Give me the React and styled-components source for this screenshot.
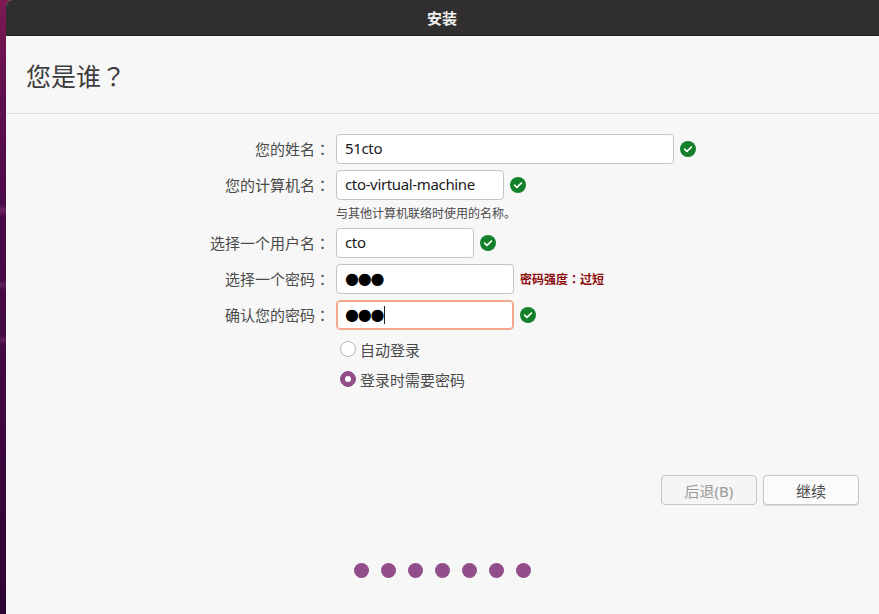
import styled, { createGlobalStyle } from 'styled-components'

const GlobalStyle = createGlobalStyle`
    html, body {
        margin: 0;
        padding: 0;
        height: 614px;
        overflow: hidden;
        background: linear-gradient(180deg,
            #7d1a52 0px, #5e0e50 100px, #4c0a4a 205px,
            #6a2560 210px, #4a0a49 216px, #470a48 280px,
            #62205a 285px, #460a47 290px, #440a46 336px,
            #5f1f58 340px, #430945 345px, #2f0433 614px);
    }
`

function Check() {
    return (
        <CheckIcon viewBox="0 0 16 16">
            <circle cx="8" cy="8" r="8" fill="#12812a" />
            <path d="M4.6 8.2 L7 10.4 L11.4 6" fill="none" stroke="#fff" strokeWidth="1.7" strokeLinecap="round" strokeLinejoin="round" />
        </CheckIcon>
    )
}

export default function App() {
    return (
        <>
            <GlobalStyle />
            <Window>
                <TitleBar>安装</TitleBar>
                <Heading>
                    <h1>您是谁<Punct>？</Punct></h1>
                </Heading>
                <Form>
                    <Row>
                        <Label>您的姓名<Punct>：</Punct></Label>
                        <Input $width={338}>51cto</Input>
                        <Check />
                    </Row>
                    <Row>
                        <Label>您的计算机名<Punct>：</Punct></Label>
                        <Input $width={168}>cto-virtual-machine</Input>
                        <Check />
                    </Row>
                    <Hint>与其他计算机联络时使用的名称。</Hint>
                    <Row>
                        <Label>选择一个用户名<Punct>：</Punct></Label>
                        <Input $width={138}>cto</Input>
                        <Check />
                    </Row>
                    <Row>
                        <Label>选择一个密码<Punct>：</Punct></Label>
                        <Input $width={178}><Dots>●●●</Dots></Input>
                        <Strength>密码强度<Punct>：</Punct>过短</Strength>
                    </Row>
                    <Row>
                        <Label>确认您的密码<Punct>：</Punct></Label>
                        <Input $width={178} $focused><Dots>●●●</Dots><Caret /></Input>
                        <Check />
                    </Row>
                    <Options>
                        <Option>
                            <Radio />
                            自动登录
                        </Option>
                        <Option>
                            <Radio $checked />
                            登录时需要密码
                        </Option>
                    </Options>
                </Form>
                <Actions>
                    <Button disabled>后退(B)</Button>
                    <Button>继续</Button>
                </Actions>
                <Progress>
                    {[0, 1, 2, 3, 4, 5, 6].map((i) => <Dot key={i} />)}
                </Progress>
            </Window>
        </>
    )
}

const Window = styled.div`
    margin-left: 6px;
    height: 614px;
    display: flex;
    flex-direction: column;
    background-color: #f7f7f7;
    border-radius: 6px 0 0 0;
    overflow: hidden;
    font-family: "Noto Sans", "Noto Sans CJK SC", sans-serif;
    color: #4a4a4a;
`

const Punct = styled.span`
    font-family: "Noto Sans CJK TC", sans-serif;
`

const TitleBar = styled.div`
    height: 36px;
    flex-shrink: 0;
    display: flex;
    align-items: center;
    justify-content: center;
    box-sizing: border-box;
    padding-right: 1px;
    background-color: #302e2e;
    border-bottom: 1px solid #222;
    color: #f2f2f2;
    font-size: 15px;
    font-weight: 700;
`

const Heading = styled.div`
    height: 78px;
    flex-shrink: 0;
    box-sizing: border-box;
    display: flex;
    align-items: center;
    padding-left: 20px;
    border-bottom: 1px solid #dedede;
    h1 {
        margin: 0;
        font-size: 25px;
        font-weight: 400;
        color: #3d3d3d;
    }
`

const Form = styled.div`
    padding-top: 20px;
    display: flex;
    flex-direction: column;
    gap: 6px;
`

const Row = styled.div`
    display: flex;
    align-items: center;
    height: 30px;
`

const Label = styled.div`
    width: 324px;
    margin-right: 6px;
    padding-bottom: 2px;
    text-align: right;
    font-size: 15px;
    white-space: nowrap;
`

const Input = styled.div`
    width: ${(p) => p.$width}px;
    height: 30px;
    box-sizing: border-box;
    display: flex;
    align-items: center;
    padding: 0 8px 2px;
    background-color: #fff;
    border: 1px solid ${(p) => (p.$focused ? '#f3a78f' : '#c4c4c4')};
    box-shadow: ${(p) => (p.$focused ? 'inset 0 0 0 1px #f3a78f' : 'none')};
    border-radius: 4px;
    font-size: 15px;
    letter-spacing: -0.35px;
    color: #1a1a1a;
`

const Dots = styled.span`
    font-family: "DejaVu Sans", sans-serif;
    font-size: 16px;
    letter-spacing: -1.2px;
    color: #000;
`

const Caret = styled.span`
    width: 1px;
    height: 18px;
    margin: 2px 0 0 1px;
    background-color: #222;
`

const CheckIcon = styled.svg`
    width: 16px;
    height: 16px;
    margin-left: 6px;
`

const Hint = styled.div`
    margin: -2px 0 -1px 330px;
    height: 19px;
    line-height: 19px;
    font-size: 12px;
    color: #4a4a4a;
`

const Strength = styled.div`
    margin-left: 6px;
    font-size: 12px;
    font-weight: 700;
    color: #8b0d0d;
`

const Options = styled.div`
    margin: -2px 0 0 334px;
    display: flex;
    flex-direction: column;
`

const Option = styled.div`
    height: 30px;
    display: flex;
    align-items: center;
    font-size: 15px;
`

const Radio = styled.span`
    width: 16px;
    height: 16px;
    margin-right: 4px;
    box-sizing: border-box;
    border-radius: 50%;
    display: flex;
    align-items: center;
    justify-content: center;
    background-color: ${(p) => (p.$checked ? '#924d8b' : '#fff')};
    border: 1px solid ${(p) => (p.$checked ? '#924d8b' : '#b8b8b8')};
    &::after {
        content: '';
        display: ${(p) => (p.$checked ? 'block' : 'none')};
        width: 6px;
        height: 6px;
        border-radius: 50%;
        background-color: #fff;
    }
`

const Actions = styled.div`
    margin-top: 81px;
    padding-right: 20px;
    display: flex;
    justify-content: flex-end;
    gap: 6px;
`

const Button = styled.button`
    width: 96px;
    height: 30px;
    padding: 0;
    box-sizing: border-box;
    font-family: inherit;
    font-size: 15px;
    color: ${(p) => (p.disabled ? '#9a9a9a' : '#4a4a4a')};
    background-color: ${(p) => (p.disabled ? '#f5f5f5' : '#fbfbfb')};
    border: 1px solid #c6c6c6;
    border-radius: 4px;
    box-shadow: ${(p) => (p.disabled ? 'none' : '0 1px 1px rgba(0, 0, 0, 0.12)')};
`

const Progress = styled.div`
    margin-top: 58px;
    display: flex;
    justify-content: center;
    gap: 12px;
`

const Dot = styled.span`
    width: 15px;
    height: 15px;
    border-radius: 50%;
    background-color: #924d8b;
`
